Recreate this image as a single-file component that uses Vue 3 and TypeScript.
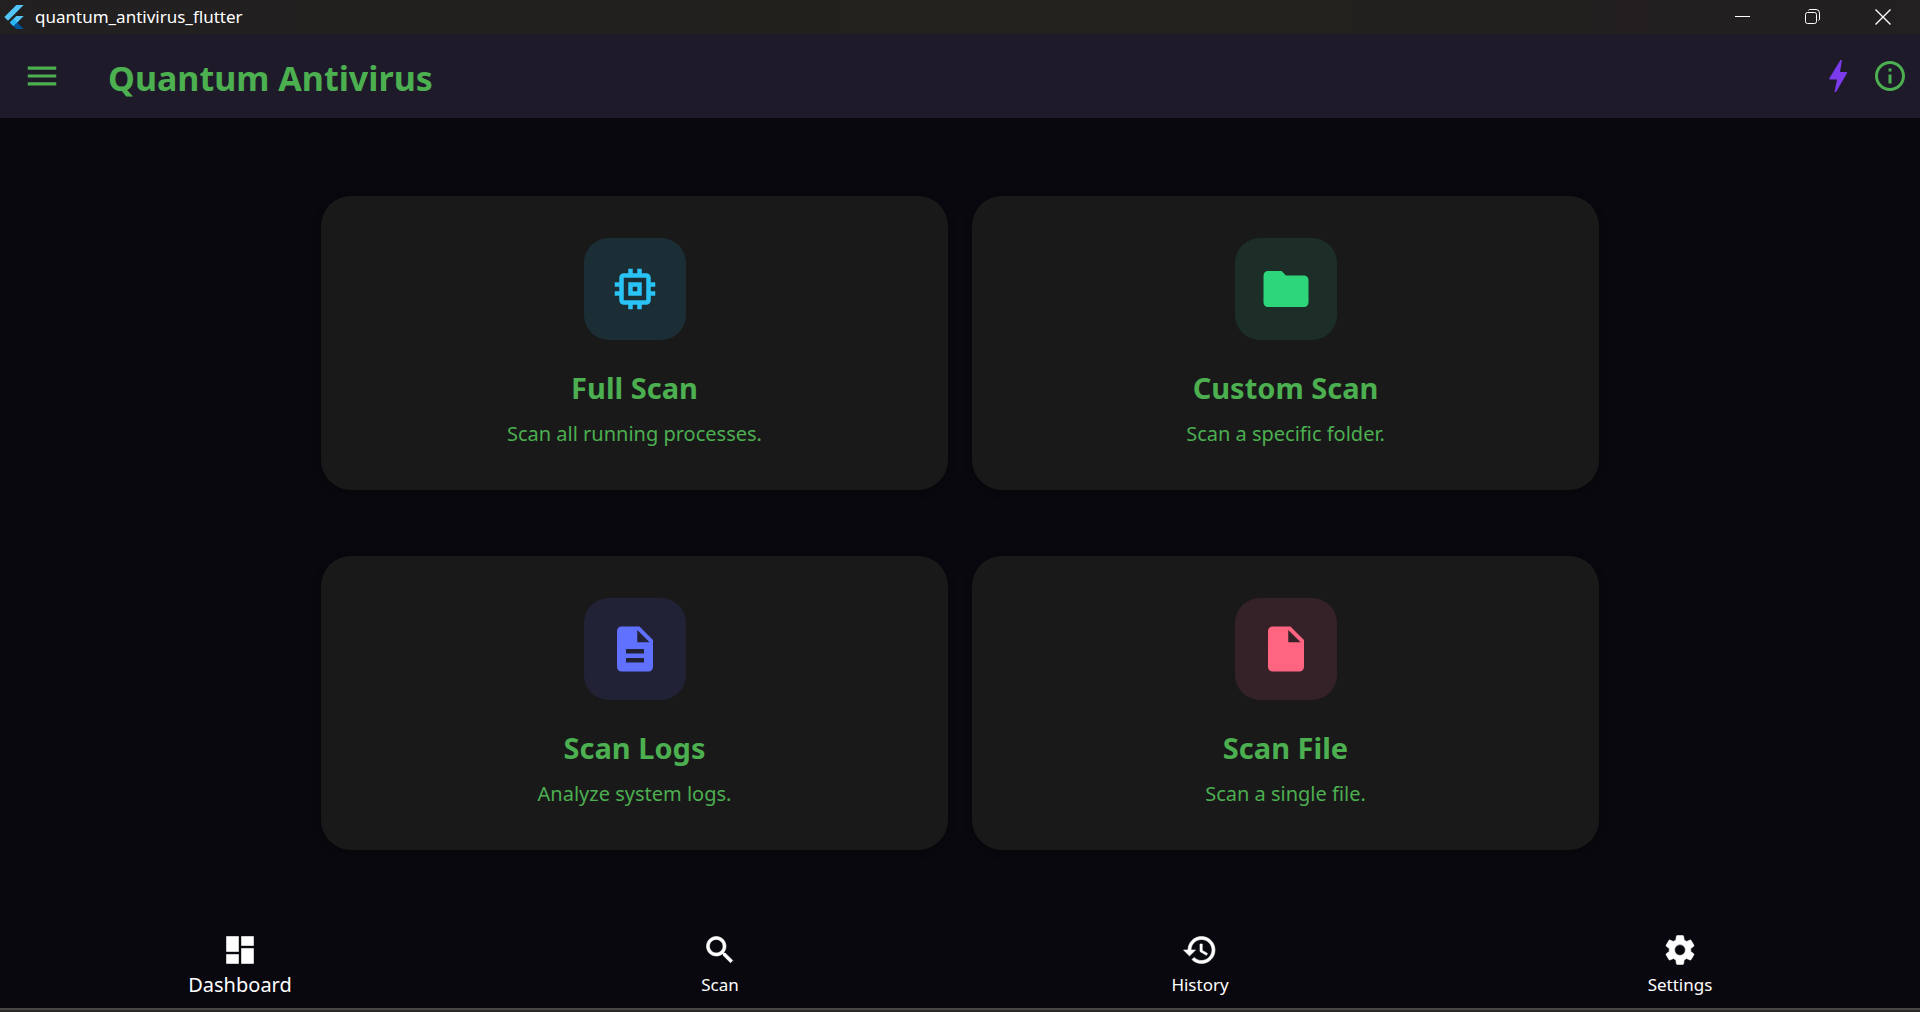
<script setup lang="ts">
interface ScanCard {
  title: string
  description: string
  tone: string
  icon: string
}

interface NavItem {
  label: string
  icon: string
}

const cards: ScanCard[] = [
  {
    title: 'Full Scan',
    description: 'Scan all running processes.',
    tone: 'cyan',
    icon: 'M15 9H9v6h6V9zm-2 4h-2v-2h2v2zm8-2V9h-2V7c0-1.1-.9-2-2-2h-2V3h-2v2h-2V3H9v2H7c-1.1 0-2 .9-2 2v2H3v2h2v2H3v2h2v2c0 1.1.9 2 2 2h2v2h2v-2h2v2h2v-2h2c1.1 0 2-.9 2-2v-2h2v-2h-2v-2h2zm-4 6H7V7h10v10z',
  },
  {
    title: 'Custom Scan',
    description: 'Scan a specific folder.',
    tone: 'green',
    icon: 'M10 4H4c-1.1 0-1.99.9-1.99 2L2 18c0 1.1.9 2 2 2h16c1.1 0 2-.9 2-2V8c0-1.1-.9-2-2-2h-8l-2-2z',
  },
  {
    title: 'Scan Logs',
    description: 'Analyze system logs.',
    tone: 'blue',
    icon: 'M14 2H6c-1.1 0-1.99.9-1.99 2L4 20c0 1.1.89 2 1.99 2H18c1.1 0 2-.9 2-2V8l-6-6zm2 16H8v-2h8v2zm0-4H8v-2h8v2zm-3-5V3.5L18.5 9H13z',
  },
  {
    title: 'Scan File',
    description: 'Scan a single file.',
    tone: 'pink',
    icon: 'M6 2c-1.1 0-1.99.9-1.99 2L4 20c0 1.1.89 2 1.99 2H18c1.1 0 2-.9 2-2V8l-6-6H6zm7 7V3.5L18.5 9H13z',
  },
]

const navItems: NavItem[] = [
  { label: 'Dashboard', icon: 'M3 13h8V3H3v10zm0 8h8v-6H3v6zm10 0h8V11h-8v10zm0-18v6h8V3h-8z' },
  {
    label: 'Scan',
    icon: 'M15.5 14h-.79l-.28-.27C15.41 12.59 16 11.11 16 9.5 16 5.91 13.09 3 9.5 3S3 5.91 3 9.5 5.91 16 9.5 16c1.61 0 3.09-.59 4.23-1.57l.27.28v.79l5 4.99L20.49 19l-4.99-5zm-6 0C7.01 14 5 11.99 5 9.5S7.01 5 9.5 5 14 7.01 14 9.5 11.99 14 9.5 14z',
  },
  {
    label: 'History',
    icon: 'M13 3c-4.97 0-9 4.03-9 9H1l3.89 3.89.07.14L9 12H6c0-3.87 3.13-7 7-7s7 3.13 7 7-3.13 7-7 7c-1.93 0-3.68-.79-4.94-2.06l-1.42 1.42C8.27 19.99 10.51 21 13 21c4.97 0 9-4.03 9-9s-4.03-9-9-9zm-1 5v5l4.28 2.54.72-1.21-3.5-2.08V8H12z',
  },
  {
    label: 'Settings',
    icon: 'M19.14 12.94c.04-.3.06-.61.06-.94 0-.32-.02-.64-.07-.94l2.03-1.58c.18-.14.23-.41.12-.61l-1.92-3.32c-.12-.22-.37-.29-.59-.22l-2.39.96c-.5-.38-1.03-.7-1.62-.94l-.36-2.54c-.04-.24-.24-.41-.48-.41h-3.84c-.24 0-.43.17-.47.41l-.36 2.54c-.59.24-1.13.57-1.62.94l-2.39-.96c-.22-.08-.47 0-.59.22L2.74 8.87c-.12.21-.08.47.12.61l2.03 1.58c-.05.3-.09.63-.09.94s.02.64.07.94l-2.03 1.58c-.18.14-.23.41-.12.61l1.92 3.32c.12.22.37.29.59.22l2.39-.96c.5.38 1.03.7 1.62.94l.36 2.54c.05.24.24.41.48.41h3.84c.24 0 .44-.17.47-.41l.36-2.54c.59-.24 1.13-.56 1.62-.94l2.39.96c.22.08.47 0 .59-.22l1.92-3.32c.12-.22.07-.47-.12-.61l-2.01-1.58zM12 15.6c-1.98 0-3.6-1.62-3.6-3.6s1.62-3.6 3.6-3.6 3.6 1.62 3.6 3.6-1.62 3.6-3.6 3.6z',
  },
]

const activeItem = 'Dashboard'
</script>

<template>
  <div class="window">
    <div class="title-bar">
      <svg class="logo" viewBox="0 0 24 24" aria-hidden="true">
        <path d="M14.314 0L2.300 12 6 15.700 21.684 0z" fill="#54c5f8" />
        <path d="M14.328 11.072L7.857 17.530l3.690 3.690L21.700 11.072z" fill="#54c5f8" />
        <path d="M7.857 17.530l3.690-3.690 3.690 3.690-3.690 3.690z" fill="#29b6f6" />
        <path d="M11.547 21.220l3.690-3.690L21.700 24h-7.372z" fill="#01579b" />
      </svg>
      <span class="window-title">quantum_antivirus_flutter</span>
      <div class="window-controls">
        <button type="button" aria-label="Minimize">
          <svg viewBox="0 0 16 16"><path d="M0 7.500h15" /></svg>
        </button>
        <button type="button" aria-label="Restore">
          <svg viewBox="0 0 16 16">
            <rect x="0.500" y="3.500" width="11" height="11" rx="2" />
            <path d="M3.500 1.500a2 2 0 0 1 1-1H11a3.500 3.500 0 0 1 3.500 3.500v6a2 2 0 0 1-1 1.500" />
          </svg>
        </button>
        <button type="button" class="close" aria-label="Close">
          <svg viewBox="0 0 16 16"><path d="M.500.500l15 15M15.500.500l-15 15" /></svg>
        </button>
      </div>
    </div>

    <header class="app-bar">
      <button type="button" class="icon-button" aria-label="Open menu">
        <svg viewBox="0 0 24 24"><path d="M3 18h18v-2H3v2zm0-5h18v-2H3v2zm0-7v2h18V6H3z" /></svg>
      </button>
      <h1>Quantum Antivirus</h1>
      <div class="actions">
        <button type="button" class="icon-button bolt" aria-label="Quick scan">
          <svg viewBox="0 0 38 38">
            <path d="M20.500 3h1.500L20 15h6.500q1 .3.500 1.200L16 35h-1.500L17 22.500H10q-1.200-.2-.7-1.200z" />
          </svg>
        </button>
        <button type="button" class="icon-button info" aria-label="About">
          <svg viewBox="0 0 24 24">
            <path d="M11 7h2v2h-2zm0 4h2v6h-2zm1-9C6.480 2 2 6.480 2 12s4.480 10 10 10 10-4.480 10-10S17.520 2 12 2zm0 18c-4.410 0-8-3.590-8-8s3.590-8 8-8 8 3.590 8 8-3.590 8-8 8z" />
          </svg>
        </button>
      </div>
    </header>

    <main class="cards">
      <button v-for="card in cards" :key="card.title" type="button" class="card">
        <span class="badge" :class="card.tone">
          <svg viewBox="0 0 24 24" aria-hidden="true"><path :d="card.icon" /></svg>
        </span>
        <span class="card-title">{{ card.title }}</span>
        <span class="card-text">{{ card.description }}</span>
      </button>
    </main>

    <nav class="bottom-nav">
      <button
        v-for="item in navItems"
        :key="item.label"
        type="button"
        :class="{ active: item.label === activeItem }"
      >
        <svg viewBox="0 0 24 24" aria-hidden="true"><path :d="item.icon" /></svg>
        <span>{{ item.label }}</span>
      </button>
    </nav>
    <div class="window-edge"></div>
  </div>
</template>

<style>
body {
  background: #09080e;
}
</style>

<style scoped>
.window {
  display: flex;
  flex-direction: column;
  min-height: 100vh;
  color: #4caf50;
  font-family: "Segoe UI", "Noto Sans", "Open Sans", sans-serif;
}

button {
  padding: 0;
  border: 0;
  background: none;
  color: inherit;
  font: inherit;
  cursor: pointer;
}

svg {
  display: block;
  fill: currentColor;
}

.title-bar {
  display: flex;
  align-items: center;
  height: 34px;
  padding: 0 2px;
  background: linear-gradient(90deg, #222020 0%, #22201f 25%, #22211d 45%, #22211e 70%, #231f20 85%, #222020 100%);
  color: #fff;
}

.logo {
  width: 24px;
  height: 24px;
}

.window-title {
  flex: 1;
  padding-left: 9px;
  font-size: 17px;
  line-height: 24px;
}

.window-controls {
  display: flex;
}

.window-controls button {
  display: flex;
  align-items: center;
  justify-content: center;
  width: 70px;
  height: 34px;
}

.window-controls svg {
  width: 16px;
  height: 16px;
  fill: none;
  stroke: currentColor;
}

.window-controls .close svg {
  stroke-width: 1.4;
}

.app-bar {
  display: flex;
  align-items: center;
  height: 84px;
  padding: 0 12px 0 23px;
  background: #1f1a29;
}

.icon-button svg {
  width: 38px;
  height: 38px;
}

.icon-button.info svg {
  width: 36px;
  height: 36px;
}

.bolt {
  color: #7c3aed;
}

h1 {
  flex: 1;
  margin: 0;
  padding: 3px 0 0 47px;
  font-size: 34px;
  font-weight: 700;
  line-height: 44px;
}

.actions {
  display: flex;
  align-items: center;
  gap: 14px;
}

.cards {
  display: grid;
  grid-template-columns: 1fr 1fr;
  gap: 66px 24px;
  flex: 1;
  align-content: start;
  box-sizing: border-box;
  width: 100%;
  max-width: 1326px;
  margin: 0 auto;
  padding: 78px 24px 64px;
}

.card {
  display: flex;
  flex-direction: column;
  align-items: center;
  height: 294px;
  padding-top: 42px;
  border-radius: 30px;
  background: #19191a;
  box-shadow: 0 2px 8px rgba(0, 0, 0, 0.3);
}

.badge {
  display: flex;
  align-items: center;
  justify-content: center;
  width: 102px;
  height: 102px;
  border-radius: 25px;
}

.badge svg {
  width: 54px;
  height: 54px;
}

.cyan {
  background: #1c2e35;
  color: #29c4f5;
}

.green {
  background: #1c2e27;
  color: #2ed67b;
}

.blue {
  background: #222236;
  color: #6070ff;
}

.pink {
  background: #342228;
  color: #ff6480;
}

.card-title {
  margin-top: 28px;
  font-size: 29px;
  font-weight: 700;
  line-height: 40px;
}

.card-text {
  margin-top: 12px;
  font-size: 20px;
  line-height: 28px;
}

.bottom-nav {
  display: grid;
  grid-template-columns: repeat(4, 1fr);
  padding: 18px 0 6px;
  color: #fff;
}

.bottom-nav button {
  display: flex;
  flex-direction: column;
  align-items: center;
  font-size: 17px;
  line-height: 34px;
}

.bottom-nav svg {
  width: 36px;
  height: 36px;
  stroke: currentColor;
  stroke-width: 0.4;
}

.bottom-nav .active {
  font-size: 20px;
}

.window-edge {
  height: 2px;
  border-top: 2px solid #484644;
  background: #2b2927;
}
</style>
